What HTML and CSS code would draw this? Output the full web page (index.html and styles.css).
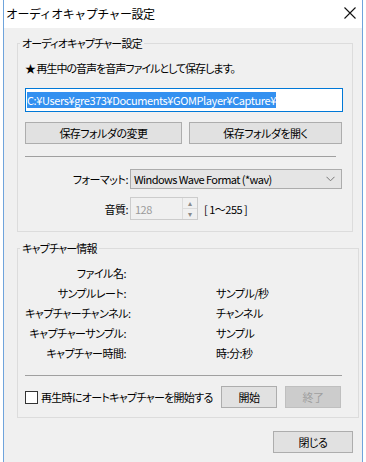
FILE: index.html
```html
<!DOCTYPE html>
<html lang="ja">
<head>
    <meta charset="UTF-8">
    <title>オーディオキャプチャー設定</title>
    <link rel="stylesheet" href="styles.css">
</head>
<body>
    <div class="window">
        <div class="titlebar">
            <span class="title">オーディオキャプチャー設定</span>
            <svg class="close-x" width="12" height="12" viewBox="0 0 12 12">
                <path d="M0.5 0.5 L11.5 11.5 M11.5 0.5 L0.5 11.5" stroke="#111" stroke-width="1.1" fill="none"/>
            </svg>
        </div>

        <div class="client">
            <fieldset class="group group-settings">
                <legend>オーディオキャプチャー設定</legend>
                <div class="note">★ 再生中の音声を音声ファイルとして保存します。</div>
                <div class="path-box"><span class="selected">C:¥Users¥gre373¥Documents¥GOMPlayer¥Capture¥</span></div>
                <div class="folder-buttons">
                    <button class="btn">保存フォルダの変更</button>
                    <button class="btn">保存フォルダを開く</button>
                </div>
                <hr class="sep">
                <div class="form-row format-row">
                    <span class="label">フォーマット:</span>
                    <div class="select">
                        <span class="select-text">Windows Wave Format (*wav)</span>
                        <svg width="9" height="6" viewBox="0 0 9 6"><path d="M0.5 0.8 L4.5 4.8 L8.5 0.8" stroke="#777" fill="none"/></svg>
                    </div>
                </div>
                <div class="form-row quality-row">
                    <span class="label">音質:</span>
                    <div class="spin">
                        <span class="spin-value">128</span>
                        <div class="spin-arrows">
                            <span>▴</span>
                            <span>▾</span>
                        </div>
                    </div>
                    <span class="range">[ 1～255 ]</span>
                </div>
            </fieldset>

            <fieldset class="group group-info">
                <legend>キャプチャー情報</legend>
                <div class="info-grid">
                    <span class="label">ファイル名:</span><span></span>
                    <span class="label">サンプルレート:</span><span>サンプル/秒</span>
                    <span class="label">キャプチャーチャンネル:</span><span>チャンネル</span>
                    <span class="label">キャプチャーサンプル:</span><span>サンプル</span>
                    <span class="label">キャプチャー時間:</span><span>時:分:秒</span>
                </div>
                <hr class="sep">
                <div class="capture-row">
                    <label class="check"><span class="box"></span>再生時にオートキャプチャーを開始する</label>
                    <button class="btn btn-small">開始</button>
                    <button class="btn btn-small" disabled>終了</button>
                </div>
            </fieldset>

            <div class="footer">
                <button class="btn btn-close">閉じる</button>
            </div>
        </div>
    </div>
</body>
</html>
```

FILE: styles.css
```css
* {
    margin: 0;
    padding: 0;
    box-sizing: border-box;
}

body {
    font-family: "Noto Sans CJK JP", "Noto Sans", sans-serif;
    font-size: 12px;
    color: #000;
    background: #fff;
}

.window {
    width: 360px;
    margin-left: 3px;
    border: 1px solid #6fa4dc;
    border-top: none;
}

.titlebar {
    height: 28px;
    background: #fff;
    display: flex;
    align-items: center;
    justify-content: space-between;
    padding: 0 6px 2px 2px;
}

.title {
    font-size: 12px;
    letter-spacing: -0.5px;
}

.client {
    background: #f0f0f0;
    padding: 7px 9px 10px 13px;
    font-size: 11px;
    letter-spacing: -0.5px;
    white-space: nowrap;
    font-feature-settings: "palt";
}

.group {
    border: 1px solid #dcdcdc;
    padding: 9px 9px 11px 7px;
}

.group legend {
    padding: 0 2px;
    margin-left: -5px;
    line-height: 16px;
    letter-spacing: -0.8px;
}

.note {
    line-height: 16px;
    letter-spacing: -1px;
}

.path-box {
    margin-top: 12px;
    height: 24px;
    background: #fff;
    border: 1px solid #0078d7;
    padding: 3px 1px;
    line-height: 16px;
}

.selected {
    background: #3390f0;
    color: #fff;
    letter-spacing: -0.4px;
}

.folder-buttons {
    margin-top: 10px;
    display: grid;
    grid-template-columns: 157px 153px;
    column-gap: 7px;
}

.btn {
    font-family: inherit;
    font-size: 11px;
    letter-spacing: -0.5px;
    font-feature-settings: "palt";
    height: 22px;
    background: #e1e1e1;
    border: 1px solid #adadad;
    color: #000;
}

.btn:disabled {
    background: #cccccc;
    border-color: #bfbfbf;
    color: #a0a0a0;
}

.sep {
    border: none;
    border-top: 1px solid #a0a0a0;
    margin: 12px 7px 0 0;
}

.form-row {
    display: grid;
    grid-template-columns: 103px auto auto;
    column-gap: 2px;
    align-items: center;
    justify-content: start;
}

.format-row {
    margin-top: 12px;
    grid-template-columns: 103px 212px;
}

.quality-row {
    margin-top: 8px;
}

.label {
    text-align: right;
}

.select {
    height: 20px;
    background: #e5e5e5;
    border: 1px solid #acacac;
    display: flex;
    align-items: center;
    justify-content: space-between;
    padding: 0 6px 0 3px;
}

.select-text {
    letter-spacing: -0.55px;
}

.spin {
    width: 68px;
    height: 23px;
    border: 1px solid #cccccc;
    background: #f0f0f0;
    display: flex;
    justify-content: space-between;
}

.spin-value {
    color: #9a9a9a;
    padding: 3px 0 0 4px;
}

.spin-arrows {
    width: 15px;
    display: flex;
    flex-direction: column;
    border-left: 1px solid #dcdcdc;
    font-size: 8px;
    color: #8a8a8a;
    text-align: center;
}

.spin-arrows span {
    flex: 1;
    line-height: 10px;
}

.spin-arrows span + span {
    border-top: 1px solid #dcdcdc;
}

.range {
    margin-left: 4px;
}

.group-info {
    margin-top: 8px;
    padding: 7px 9px 9px 7px;
}

.info-grid {
    display: grid;
    grid-template-columns: 101px auto;
    column-gap: 90px;
    grid-auto-rows: 20px;
    align-items: center;
}

.capture-row {
    margin-top: 10px;
    display: flex;
    align-items: center;
}

.check {
    display: flex;
    align-items: center;
    gap: 3px;
    width: 196px;
    letter-spacing: -0.7px;
}

.box {
    flex-shrink: 0;
    width: 13px;
    height: 13px;
    background: #fff;
    border: 1px solid #333;
}

.btn-small {
    width: 56px;
    margin-right: 8px;
}

.footer {
    margin-top: 13px;
    display: flex;
    justify-content: flex-end;
}

.btn-close {
    width: 80px;
}
```
